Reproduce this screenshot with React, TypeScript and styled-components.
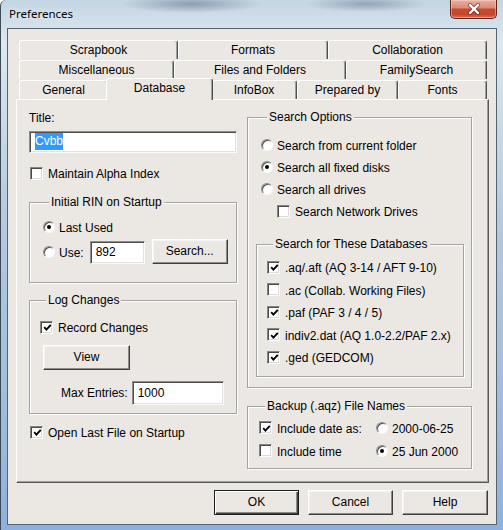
import React from "react";
import styled, { createGlobalStyle, css } from "styled-components";

const face = "#ebe8e4";

const GlobalStyle = createGlobalStyle`
  html, body {
    margin: 0;
    padding: 0;
  }
  body {
    font-family: "Liberation Sans", Arial, sans-serif;
    font-size: 12px;
    color: #000;
    overflow: hidden;
  }
`;

type TabDef = { label: string; w: number; active?: boolean };

const tabRows: TabDef[][] = [
  [
    { label: "Scrapbook", w: 159 },
    { label: "Formats", w: 150 },
    { label: "Collaboration", w: 159 },
  ],
  [
    { label: "Miscellaneous", w: 155 },
    { label: "Files and Folders", w: 172 },
    { label: "FamilySearch", w: 141 },
  ],
  [
    { label: "General", w: 89 },
    { label: "Database", w: 103, active: true },
    { label: "InfoBox", w: 86 },
    { label: "Prepared by", w: 101 },
    { label: "Fonts", w: 89 },
  ],
];

const databases = [
  { label: ".aq/.aft (AQ 3-14 / AFT 9-10)", on: true },
  { label: ".ac (Collab. Working Files)", on: false },
  { label: ".paf (PAF 3 / 4 / 5)", on: true },
  { label: "indiv2.dat (AQ 1.0-2.2/PAF 2.x)", on: true },
  { label: ".ged (GEDCOM)", on: true },
];

type OptionProps = {
  checked?: boolean;
  top?: number;
  indent?: number;
  h?: number;
  children: React.ReactNode;
};

const Check: React.FC<OptionProps> = ({ checked, top, indent, h, children }) => (
  <Option $top={top} $indent={indent} $h={h} $gap={5}>
    <CheckBox>
      {checked && (
        <svg width="9" height="9" viewBox="0 0 9 9">
          <path d="M1.2 4.2 L3.4 6.6 L7.8 1.8" stroke="#000" strokeWidth="1.9" fill="none" />
        </svg>
      )}
    </CheckBox>
    <OptionText>{children}</OptionText>
  </Option>
);

const Radio: React.FC<OptionProps> = ({ checked, top, indent, h, children }) => (
  <Option $top={top} $indent={indent} $h={h} $gap={4}>
    <RadioMark $on={checked} />
    <OptionText>{children}</OptionText>
  </Option>
);

const App: React.FC = () => {
  return (
    <>
      <GlobalStyle />
      <Window>
        <TitleBar>
          <WindowTitle>Preferences</WindowTitle>
          <CloseButton>
            <svg width="14" height="12" viewBox="0 0 14 12">
              <path d="M3 2 L11 10 M11 2 L3 10" stroke="#5b1a10" strokeWidth="4" strokeLinecap="round" opacity="0.55" />
              <path d="M3 2 L11 10 M11 2 L3 10" stroke="#fff" strokeWidth="2.4" strokeLinecap="round" />
            </svg>
          </CloseButton>
        </TitleBar>

        <Client>
          <TabStrip>
            {tabRows.map((row, i) => (
              <TabRow key={i}>
                {row.map((t) => (
                  <Tab key={t.label} $w={t.w} $active={t.active}>
                    {t.label}
                  </Tab>
                ))}
              </TabRow>
            ))}
          </TabStrip>

          <Panel>
            <Column>
              <FieldLabel>Title:</FieldLabel>
              <TextBox $w={208} $h={22} $top={6}>
                <Selected>Cvbb</Selected>
              </TextBox>
              <Check top={9} indent={1}>Maintain Alpha Index</Check>

              <Group $top={18} $pad="0 0 17px 13px">
                <Caption>Initial RIN on Startup</Caption>
                <Radio checked top={7}>Last Used</Radio>
                <UseRow>
                  <RadioMark />
                  <InlineLabel>Use:</InlineLabel>
                  <TextBox $w={55} $h={23} $left={6}>892</TextBox>
                  <Button $w={76} $h={25} $left={7}>Search...</Button>
                </UseRow>
              </Group>

              <Group $top={17} $pad="0 0 8px 10px">
                <Caption>Log Changes</Caption>
                <Check checked top={9}>Record Changes</Check>
                <Button $w={87} $h={25} $left={3} $top={7}>View</Button>
                <MaxRow>
                  <span>Max Entries:</span>
                  <TextBox $w={92} $h={24} $left={4}>1000</TextBox>
                </MaxRow>
              </Group>

              <Check checked top={7} indent={1}>Open Last File on Startup</Check>
            </Column>

            <Column>
              <Group $top={7} $pad="0 0 10px 13px">
                <Caption>Search Options</Caption>
                <Radio top={10}>Search from current folder</Radio>
                <Radio checked>Search all fixed disks</Radio>
                <Radio>Search all drives</Radio>
                <Check indent={16}>Search Network Drives</Check>

                <Group $top={22} $pad="0 0 7px 10px" $inner>
                  <Caption>Search for These Databases</Caption>
                  <DbList>
                    {databases.map((d) => (
                      <Check key={d.label} checked={d.on} h={22.5}>
                        {d.label}
                      </Check>
                    ))}
                  </DbList>
                </Group>
              </Group>

              <Group $top={18} $pad="0 0 6px 11px">
                <Caption>Backup (.aqz) File Names</Caption>
                <BackupGrid>
                  <Check checked>Include date as:</Check>
                  <Radio>2000-06-25</Radio>
                  <Check>Include time</Check>
                  <Radio checked>25 Jun 2000</Radio>
                </BackupGrid>
              </Group>
            </Column>
          </Panel>

          <ButtonRow>
            <Button $w={85} $h={25} $default>OK</Button>
            <Button $w={85} $h={25}>Cancel</Button>
            <Button $w={86} $h={25}>Help</Button>
          </ButtonRow>
        </Client>
      </Window>
    </>
  );
};

const Window = styled.div`
  box-sizing: border-box;
  width: 503px;
  height: 530px;
  display: flex;
  flex-direction: column;
  border-left: 1px solid #3e4a57;
  border-top-left-radius: 6px;
  background:
    radial-gradient(ellipse 70px 9px at 190px 4px, rgba(70, 90, 110, 0.45), transparent),
    radial-gradient(ellipse 60px 8px at 365px 4px, rgba(70, 90, 110, 0.4), transparent),
    linear-gradient(180deg, #c4d5e3 0%, #dde8ef 8%, #cfdfea 18%, #b4cbe0 40%, #9fbbdc 80%, #8fb0de 100%);
`;

const TitleBar = styled.div`
  height: 28px;
  display: flex;
  align-items: flex-start;
  justify-content: space-between;
  flex: none;
`;

const WindowTitle = styled.div`
  font-family: "Noto Sans", "Open Sans", sans-serif;
  font-size: 11.5px;
  line-height: 16px;
  margin: 6px 0 0 8px;
  color: #000;
  text-shadow: 0 0 6px rgba(255, 255, 255, 0.9);
`;

const CloseButton = styled.div`
  box-sizing: border-box;
  width: 47px;
  height: 19px;
  margin-right: 6px;
  border: 1px solid #5e2319;
  border-top: none;
  border-radius: 0 0 5px 5px;
  background: linear-gradient(180deg, #eab0a3 0%, #dc8b78 42%, #c44a33 52%, #c6452c 80%, #d8714f 100%);
  box-shadow: inset 0 0 0 1px rgba(255, 220, 210, 0.45);
  display: flex;
  align-items: center;
  justify-content: center;
`;

const Client = styled.div`
  flex: 1;
  margin: 0 6px 5px 6px;
  border: 1px solid #55626f;
  background: ${face};
  padding: 10px 7px 0 8px;
  display: flex;
  flex-direction: column;
`;

const TabStrip = styled.div`
  margin: 0 2px 0 3px;
  position: relative;
  z-index: 1;
`;

const TabRow = styled.div`
  display: flex;
  height: 20px;
`;

const Tab = styled.div<{ $w: number; $active?: boolean }>`
  box-sizing: border-box;
  width: ${(p) => p.$w}px;
  height: 19px;
  margin-top: 1px;
  flex: none;
  background: ${face};
  border-top: 1px solid #fff;
  border-left: 1px solid #fff;
  border-right: 1px solid #505050;
  border-radius: 3px 3px 0 0;
  box-shadow: inset -1px 0 0 #a0a0a0;
  display: flex;
  align-items: center;
  justify-content: center;
  line-height: 14px;
  padding-bottom: 1px;
  white-space: nowrap;

  ${(p) =>
    p.$active &&
    css`
      width: ${p.$w + 4}px;
      height: 22px;
      margin: -1px -2px -1px -2px;
      padding-bottom: 4px;
      position: relative;
      z-index: 2;
    `}
`;

const Panel = styled.div`
  box-sizing: border-box;
  height: 384px;
  flex: none;
  background: ${face};
  border-top: 1px solid #fff;
  border-left: 1px solid #fff;
  border-right: 1px solid #5a5a5a;
  border-bottom: 1px solid #5a5a5a;
  box-shadow: inset -1px -1px 0 #a0a0a0;
  padding: 10px 16px 0 12px;
  display: grid;
  grid-template-columns: 208px 225px;
  column-gap: 10px;
  align-items: start;
`;

const Column = styled.div`
  display: flex;
  flex-direction: column;
`;

const FieldLabel = styled.div`
  line-height: 14px;
  padding-top: 1px;
`;

const TextBox = styled.div<{ $w: number; $h: number; $top?: number; $left?: number }>`
  box-sizing: border-box;
  width: ${(p) => p.$w}px;
  height: ${(p) => p.$h}px;
  margin-top: ${(p) => p.$top ?? 0}px;
  margin-left: ${(p) => p.$left ?? 0}px;
  flex: none;
  background: #fff;
  border: 1px solid;
  border-color: #8d8d8d #fbfbfb #fbfbfb #8d8d8d;
  box-shadow: inset 1px 1px 0 #4e4e4e, inset -1px -1px 0 #e2e2e2;
  padding: 0 0 1px 5px;
  display: flex;
  align-items: center;
  line-height: 14px;
`;

const Selected = styled.span`
  background: #3399ff;
  color: #fff;
  line-height: 17px;
`;

const Option = styled.div<{ $top?: number; $indent?: number; $h?: number; $gap: number }>`
  display: flex;
  align-items: center;
  gap: ${(p) => p.$gap}px;
  height: ${(p) => p.$h ?? 22}px;
  margin-top: ${(p) => p.$top ?? 0}px;
  margin-left: ${(p) => p.$indent ?? 0}px;
  white-space: nowrap;
  line-height: 14px;
`;

const OptionText = styled.span`
  padding-top: 2px;
`;

const CheckBox = styled.span`
  box-sizing: border-box;
  width: 13px;
  height: 13px;
  flex: none;
  background: #fff;
  border: 1px solid;
  border-color: #868686 #fdfdfd #fdfdfd #868686;
  box-shadow: inset 1px 1px 0 #4a4a4a, inset -1px -1px 0 #dcdcdc;
  display: flex;
  align-items: center;
  justify-content: center;
  padding: 1px 0 0 1px;
`;

const RadioMark = styled.span<{ $on?: boolean }>`
  box-sizing: border-box;
  width: 12px;
  height: 12px;
  flex: none;
  border-radius: 50%;
  background: #fff;
  border: 1px solid;
  border-color: #8a8a8a #fafafa #fafafa #8a8a8a;
  box-shadow: inset 1px 1px 0 #555;
  display: flex;
  align-items: center;
  justify-content: center;

  &::after {
    content: "";
    width: 4px;
    height: 4px;
    border-radius: 50%;
    background: #000;
    display: ${(p) => (p.$on ? "block" : "none")};
  }
`;

const Group = styled.div<{ $top?: number; $pad: string; $inner?: boolean }>`
  display: flex;
  flex-direction: column;
  margin-top: ${(p) => p.$top ?? 0}px;
  padding: ${(p) => p.$pad};
  border: 1px solid #a4a4a4;
  box-shadow: inset 1px 1px 0 #fff, 1px 1px 0 #fff;
  ${(p) =>
    p.$inner &&
    css`
      margin-left: -5px;
      margin-right: 7px;
    `}
`;

const Caption = styled.div`
  align-self: flex-start;
  margin: -8px 0 0 6px;
  padding: 0 2px;
  line-height: 14px;
  background: ${face};
  white-space: nowrap;
`;

const UseRow = styled.div`
  display: flex;
  align-items: center;
  height: 26px;
  margin-top: 1px;
`;

const InlineLabel = styled.span`
  margin-left: 4px;
  padding-top: 2px;
  line-height: 14px;
`;

const Button = styled.button<{ $w: number; $h: number; $left?: number; $top?: number; $default?: boolean }>`
  box-sizing: border-box;
  width: ${(p) => p.$w}px;
  height: ${(p) => p.$h}px;
  margin-left: ${(p) => p.$left ?? 0}px;
  margin-top: ${(p) => p.$top ?? 0}px;
  flex: none;
  padding: 0 0 1px 0;
  font: inherit;
  color: #000;
  background: ${face};
  border: 1px solid;
  border-color: #fff #3f3f3f #3f3f3f #fff;
  box-shadow: inset -1px -1px 0 #8c8c8c, inset 1px 1px 0 #f4f4f4;
  align-self: flex-start;

  ${(p) =>
    p.$default &&
    css`
      border-color: #1e1e1e;
      box-shadow: inset 1px 1px 0 #fff, inset -1px -1px 0 #3f3f3f, inset -2px -2px 0 #8c8c8c;
    `}
`;

const MaxRow = styled.div`
  display: flex;
  align-items: center;
  margin: 11px 0 0 21px;
  line-height: 14px;
`;

const DbList = styled.div`
  display: flex;
  flex-direction: column;
  margin-top: 5px;
`;

const BackupGrid = styled.div`
  display: grid;
  grid-template-columns: 117px auto;
  row-gap: 1px;
  margin-top: 4px;
`;

const ButtonRow = styled.div`
  display: flex;
  justify-content: flex-end;
  gap: 9px;
  margin-top: 7px;
  padding-right: 1px;
`;

export default App;
